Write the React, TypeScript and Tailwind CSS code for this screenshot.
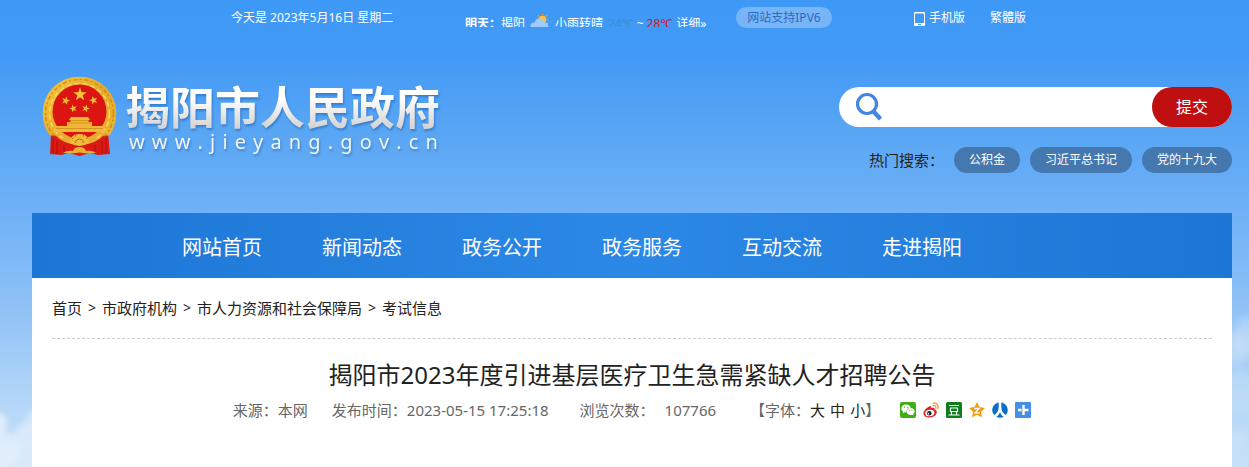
import { FaRenren, FaWeixin } from "react-icons/fa";

const NAV = ["网站首页", "新闻动态", "政务公开", "政务服务", "互动交流", "走进揭阳"];
const HOT = ["公积金", "习近平总书记", "党的十九大"];
const CRUMBS = ["首页", "市政府机构", "市人力资源和社会保障局", "考试信息"];

function star(cx: number, cy: number, r: number, turn = 0, inner = 0.4) {
  return Array.from({ length: 10 }, (_, i) => {
    const a = (Math.PI / 5) * i - Math.PI / 2 + turn;
    const d = i % 2 ? r * inner : r;
    return `${(cx + d * Math.cos(a)).toFixed(2)},${(cy + d * Math.sin(a)).toFixed(2)}`;
  }).join(" ");
}

function Emblem() {
  return (
    <svg viewBox="0 0 75 81" className="h-[81px] w-[75px] shrink-0" role="img" aria-label="国徽">
      <defs>
        <linearGradient id="gold" x1="0" y1="0" x2="1" y2="1">
          <stop offset="0" stopColor="#f7c93c" />
          <stop offset="0.5" stopColor="#e5a82a" />
          <stop offset="1" stopColor="#efb82f" />
        </linearGradient>
      </defs>
      <path d="M9 56H66L68 78L56 79L48 77L37.500 80L27 77L19 79L8 78Z" fill="#dc1a14" />
      <circle cx="37.5" cy="37.5" r="37" fill="url(#gold)" clipPath="inset(0 0 15px 0)" />
      <path d="M12 58Q22 69 37.500 69Q53 69 63 58L58 54H17Z" fill="#e8ad2c" />
      <circle cx="37.5" cy="37.5" r="34" fill="none" stroke="#c98a1c" strokeWidth="1.3" strokeDasharray="4 2 2 3" clipPath="inset(0 0 12px 0)" />
      <circle cx="37.5" cy="37.5" r="30" fill="none" stroke="#fbdc62" strokeWidth="1.4" strokeDasharray="5 3" clipPath="inset(0 0 6px 0)" />
      <circle cx="37.5" cy="35.5" r="27" fill="#dc1512" />
      <polygon points={star(38, 18.5, 7)} fill="#f6c63a" />
      <polygon points={star(23.7, 24.7, 4.5, 0.3)} fill="#f0b936" />
      <polygon points={star(31.3, 32.5, 4.2, -0.3)} fill="#f0b936" />
      <polygon points={star(43.7, 32.5, 4.2, 0.3)} fill="#f0b936" />
      <polygon points={star(51.5, 24.3, 4.5, -0.3)} fill="#f0b936" />
      <path d="M29 41H46L48 44H46.500V46H50V50H62V56H13V50H25V46H28.500V44H27Z" fill="#f0b834" />
      <path d="M28 44.500H47M26 47H49M14 52.500H61" stroke="#c98618" strokeWidth="0.7" />
      <path d="M28 67Q28 58 37.500 58Q47 58 47 67Q42 70 37.500 70Q33 70 28 67Z" fill="#f0bb38" />
      <path d="M29 61L31 63M33 58L34 60.500M42 58L41 60.500M46 61L44 63M33 67Q34 63 37.500 63Q41 63 42 67" fill="none" stroke="#b96f12" strokeWidth="1" />
      <path d="M21 77Q25 74 31 75Q32 71 37.500 71Q43 71 44 75Q50 74 54 77Q46 78 37.500 76.500Q29 78 21 77Z" fill="#e9b02e" />
      <path d="M11 62V77M15 65V78M60 65V78M64 62V77M22 69V75M53 69V75" stroke="#a90d0b" strokeWidth="0.9" />
    </svg>
  );
}

function Clouds() {
  return (
    <>
      <svg viewBox="0 0 90 80" className="absolute -left-8 bottom-0 h-20 w-[90px]" aria-hidden="true">
        <g fill="#e4f0fc" className="blur-[3px]">
          <circle cx="28" cy="36" r="11" opacity="0.9" />
          <circle cx="34" cy="62" r="18" opacity="0.75" />
          <circle cx="60" cy="48" r="13" opacity="0.7" />
          <circle cx="66" cy="32" r="8" opacity="0.6" />
          <rect x="10" y="58" width="70" height="30" opacity="0.6" />
        </g>
      </svg>
      <svg viewBox="0 0 60 160" className="absolute -right-4 bottom-0 h-40 w-[60px]" aria-hidden="true">
        <g fill="#cfe4fa" className="blur-[4px]">
          <ellipse cx="42" cy="30" rx="14" ry="20" opacity="0.5" />
          <ellipse cx="28" cy="42" rx="16" ry="16" opacity="0.5" />
          <ellipse cx="36" cy="85" rx="20" ry="22" opacity="0.35" />
          <ellipse cx="32" cy="130" rx="14" ry="6" opacity="0.7" />
          <ellipse cx="32" cy="146" rx="20" ry="10" opacity="0.3" />
        </g>
      </svg>
    </>
  );
}

function TopBar() {
  return (
    <div className="flex h-9 items-start pl-[199px] text-[12px] leading-[16px] text-white">
      <span className="w-[234px] pt-[10px]">今天是 2023年5月16日 星期二</span>
      <div className="flex h-[27px] w-[271px] items-start overflow-hidden pt-4">
        <b>明天：</b>
        <span>揭阳</span>
        <svg viewBox="0 0 20 14" className="-mt-[2px] mx-[5px] h-[14px] w-5 shrink-0" aria-hidden="true">
          <circle cx="12.500" cy="5.500" r="3.800" fill="#fcc43e" />
          <path d="M12.500 0V1M8 1.500L9 2.500M17 1.500L16 2.500M18.500 6H17.500M18 10L17 9" stroke="#e8b24a" strokeWidth="1.200" />
          <path d="M1 13Q-0.500 11.500 1.500 9.500Q2.500 8 4.500 8.500Q6 4 9.500 4.500Q13 5 13.500 8Q18 8 18.500 13Z" fill="#9fcbfc" />
        </svg>
        <span>小雨转晴</span>
        <span className="ml-[5px] text-[#3b93c4]">24℃</span>
        <span className="mx-[3px]">~</span>
        <span className="text-[#e0101c]">28℃</span>
        <a href="#weather" className="ml-1 whitespace-nowrap">详细»</a>
      </div>
      <a href="#ipv6" className="mt-[7px] w-24 rounded-full bg-[#78b5f8] text-center leading-[21px] text-[#2f6bbd]">
        网站支持IPV6
      </a>
      <a href="#mobile" className="ml-[82px] flex items-center gap-1 pt-[10px]">
        <svg viewBox="0 0 11 14" className="mt-px h-[14px] w-[11px]" aria-hidden="true">
          <path d="M1 0H10Q11 0 11 1V13Q11 14 10 14H1Q0 14 0 13V1Q0 0 1 0ZM1 1.500V11H10V1.500ZM4 12V13H7V12Z" fill="#fff" fillRule="evenodd" />
        </svg>
        手机版
      </a>
      <a href="#traditional" className="ml-[25px] pt-[10px]">繁體版</a>
    </div>
  );
}

function Header() {
  return (
    <header className="flex h-[177px] justify-between pl-[10px]">
      <a href="#home" className="flex pt-10">
        <Emblem />
        <span className="ml-2 mt-2 flex flex-col drop-shadow-[1px_2px_1px_rgba(20,80,160,0.45)]">
          <span className="bg-gradient-to-b from-white from-30% to-[#d4d4d4] to-90% bg-clip-text text-[45px] font-bold leading-[48px] text-transparent">
            揭阳市人民政府
          </span>
          <span className="flex justify-between pl-1 pr-[2px] text-[20px] leading-5 text-[#f2f6fa]">
            {"www.jieyang.gov.cn".split("").map((c, i) => (
              <span key={i}>{c}</span>
            ))}
          </span>
        </span>
      </a>
      <div className="flex w-[393px] flex-col items-end pt-[51px]">
        <form className="flex h-10 w-full rounded-full bg-white" onSubmit={(e) => e.preventDefault()}>
          <label htmlFor="q" className="pl-4 pt-[5px]" aria-label="搜索">
            <svg viewBox="0 0 28 30" className="h-[30px] w-7" aria-hidden="true">
              <circle cx="12" cy="12" r="9.500" fill="none" stroke="#4285e4" strokeWidth="3.200" />
              <path d="M18 19L25.500 27" stroke="#4285e4" strokeWidth="4.500" />
              <path d="M18 19L20 21" stroke="#4285e4" strokeWidth="3" />
            </svg>
          </label>
          <input id="q" type="text" className="min-w-0 flex-1 bg-transparent px-2 text-[16px] outline-none" />
          <button type="submit" className="w-20 rounded-full bg-[#bf0f10] text-[16px] text-white">提交</button>
        </form>
        <div className="mt-5 flex items-center gap-[10px] text-[12px] leading-[26px] text-white">
          <span className="text-[15px] text-[#222]">热门搜索：</span>
          {HOT.map((h) => (
            <a key={h} href="#search" className="rounded-full bg-[#4478ae] px-[15px]">{h}</a>
          ))}
        </div>
      </div>
    </header>
  );
}

function ShareIcons() {
  return (
    <span className="flex gap-[7px]">
      <a href="#wechat" aria-label="微信" className="flex size-4 items-center justify-center rounded-[2px] bg-[#3fae14] text-white">
        <FaWeixin size={14} />
      </a>
      <a href="#weibo" aria-label="微博">
        <svg viewBox="0 0 16 16" className="size-4">
          <path d="M6.200 4.500C7.500 4 8.500 4.500 8.300 6C10 5.300 12 5.500 11.700 7.500C13.500 8 14.300 9.500 13.500 11.500C12.500 14 9.500 15.500 6.500 15.500C3 15.500 0.500 14 0.500 11.500C0.500 9 3.500 5.500 6.200 4.500Z" fill="#dc2227" />
          <ellipse cx="6.800" cy="11" rx="4.600" ry="3.300" fill="#fff" transform="rotate(-8 6.800 11)" />
          <circle cx="6.300" cy="11.300" r="2.300" fill="#222" />
          <circle cx="5.500" cy="11.700" r="0.800" fill="#fff" />
          <path d="M10 1.200C13.500 0.500 15.800 3.200 14.900 6.400M10.300 3.500C12.200 3.200 13.200 4.500 12.800 6" fill="none" stroke="#f0a33a" strokeWidth="1.400" strokeLinecap="round" />
        </svg>
      </a>
      <a href="#douban" aria-label="豆瓣">
        <svg viewBox="0 0 16 16" className="size-4">
          <rect width="16" height="16" rx="1.500" fill="#0e7d1c" />
          <path d="M3 3.500H13M4.500 6H11.500V9.500H4.500ZM5.500 10V12.500M10.500 10V12.500M2.500 13H13.500" fill="none" stroke="#fff" strokeWidth="1.200" />
        </svg>
      </a>
      <a href="#qzone" aria-label="QQ空间">
        <svg viewBox="0 0 16 16" className="size-4">
          <polygon points={star(8, 8.5, 8.4, 0, 0.5)} fill="#f29c0a" />
          <path d="M5.200 6.500H10.300L6 10.800H10.800" fill="none" stroke="#fff" strokeWidth="1.300" />
        </svg>
      </a>
      <a href="#renren" aria-label="人人网" className="text-[#0a6fc8]">
        <FaRenren size={16} />
      </a>
      <a href="#more" aria-label="更多">
        <svg viewBox="0 0 16 16" className="size-4">
          <rect width="16" height="16" rx="1" fill="#4490e6" />
          <path d="M8.500 3V13M3 8H6.500M7.500 8H13.500" stroke="#fff" strokeWidth="2.400" />
        </svg>
      </a>
    </span>
  );
}

export default function App() {
  return (
    <div className="relative min-h-screen overflow-hidden bg-[linear-gradient(#3e98f5_0px,#429af6_55px,#5ba7f4_140px,#6fb1f7_210px,#8cc0f6_300px,#b3d6f8_400px,#c6e0f8_467px)] pl-8 pr-[17px] font-['Noto_Sans','Noto_Sans_CJK_SC',sans-serif]">
      <Clouds />
      <div className="relative flex min-h-screen flex-col">
        <TopBar />
        <Header />
        <nav className="flex bg-gradient-to-r from-[#1c76d5] via-[#2c88e6] to-[#1c76d5] pl-[120px] pt-[5px] text-[20px] leading-[60px] text-white">
          {NAV.map((n) => (
            <a key={n} href="#nav" className="w-[140px] text-center">{n}</a>
          ))}
        </nav>
        <main className="flex-1 bg-white px-5 text-[15px] text-[#222]">
          <div className="flex h-[61px] items-center gap-[6px] border-b border-dashed border-[#ccc]">
            {CRUMBS.map((c, i) => (
              <span key={c} className="flex gap-[6px]">
                {i > 0 && <span className="text-[14px]">&gt;</span>}
                <a href="#crumb">{c}</a>
              </span>
            ))}
          </div>
          <h1 className="mt-[18px] text-center text-[24px] leading-9">揭阳市2023年度引进基层医疗卫生急需紧缺人才招聘公告</h1>
          <div className="mt-[6px] flex items-center justify-center leading-[22px] text-[#666]">
            <span>来源：本网</span>
            <span className="ml-6">发布时间：2023-05-15 17:25:18</span>
            <span className="ml-[31px]">浏览次数：</span>
            <span className="ml-[10px]">107766</span>
            <span className="ml-[34px] mr-5 flex">
              【字体：
              <span className="flex gap-[5px] text-[#222]">
                <button type="button">大</button>
                <button type="button">中</button>
                <button type="button">小</button>
              </span>
              】
            </span>
            <ShareIcons />
          </div>
        </main>
      </div>
    </div>
  );
}
